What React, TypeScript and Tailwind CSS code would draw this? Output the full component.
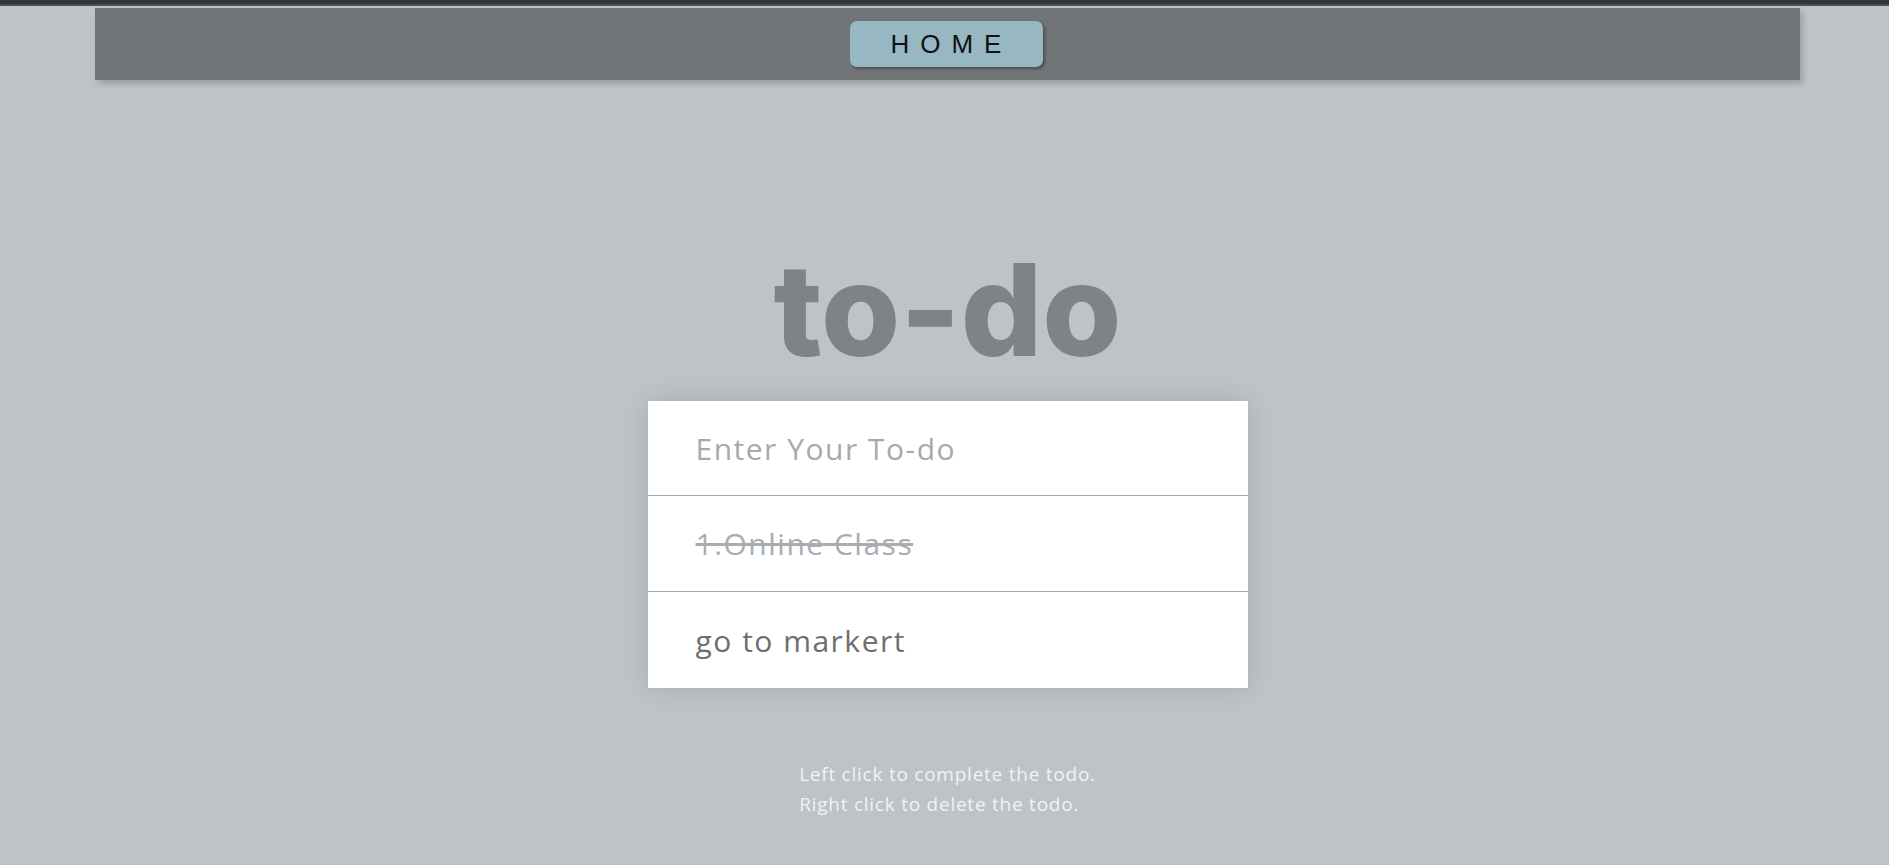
import React from 'react';

const todos = [
  { text: '1.Online Class', done: true },
  { text: 'go to markert', done: false },
];

const App: React.FC = () => {
  return (
    <div className="min-h-[865px] bg-[#bec3c7] font-['Poppins','Open_Sans',sans-serif]">
      {/* browser chrome strip */}
      <div className="h-[4px] bg-[#353535]" />
      <div className="h-[2px] bg-[#4e4f50]" />

      {/* nav */}
      <div className="pt-[2px] pl-[95px] pr-[89px]">
        <nav className="h-[72px] bg-[#727578] shadow-[3px_4px_6px_rgba(0,0,0,0.18)] flex items-center justify-center">
          <button className="ml-[-3px] w-[193px] h-[46px] rounded-[7px] bg-[#97b7c2] shadow-[2px_2px_3px_rgba(0,0,0,0.35)] text-[26px] tracking-[0.42em] pl-[0.42em] text-[#111] font-['Liberation_Sans',sans-serif] leading-none">
            HOME
          </button>
        </nav>
      </div>

      <main className="flex flex-col items-center pl-[6px]">
        <h1 className="mt-[166px] text-[128px] leading-none font-extrabold text-[#808386] font-['Inter',sans-serif]">
          to-do
        </h1>

        <div className="mt-[27px] w-[600px] bg-white shadow-[0_0_24px_rgba(0,0,0,0.12)]">
          <div className="h-[95px] flex items-center px-[48px] border-b border-[#a9a9a9]">
            <input
              className="w-full bg-transparent outline-none text-[30px] tracking-[0.05em] text-[#6b6b6b] placeholder:text-[#aaa9a6] font-['Open_Sans',sans-serif]"
              placeholder="Enter Your To-do"
            />
          </div>
          {todos.map((t, i) => (
            <div
              key={t.text}
              className={`h-[96px] flex items-center px-[48px] text-[30px] tracking-[0.05em] font-['Open_Sans',sans-serif] ${
                i < todos.length - 1 ? 'border-b border-[#a9a9a9]' : ''
              } ${t.done ? 'line-through text-[#a8adb2]' : 'text-[#6e6e6e]'}`}
            >
              {t.text}
            </div>
          ))}
        </div>

        <div className="mt-[71px] text-[19px] leading-[30px] tracking-[0.04em] text-[#f2f2f2] font-['Open_Sans',sans-serif]">
          <p>Left click to complete the todo.</p>
          <p>Right click to delete the todo.</p>
        </div>
      </main>
    </div>
  );
};

export default App;
